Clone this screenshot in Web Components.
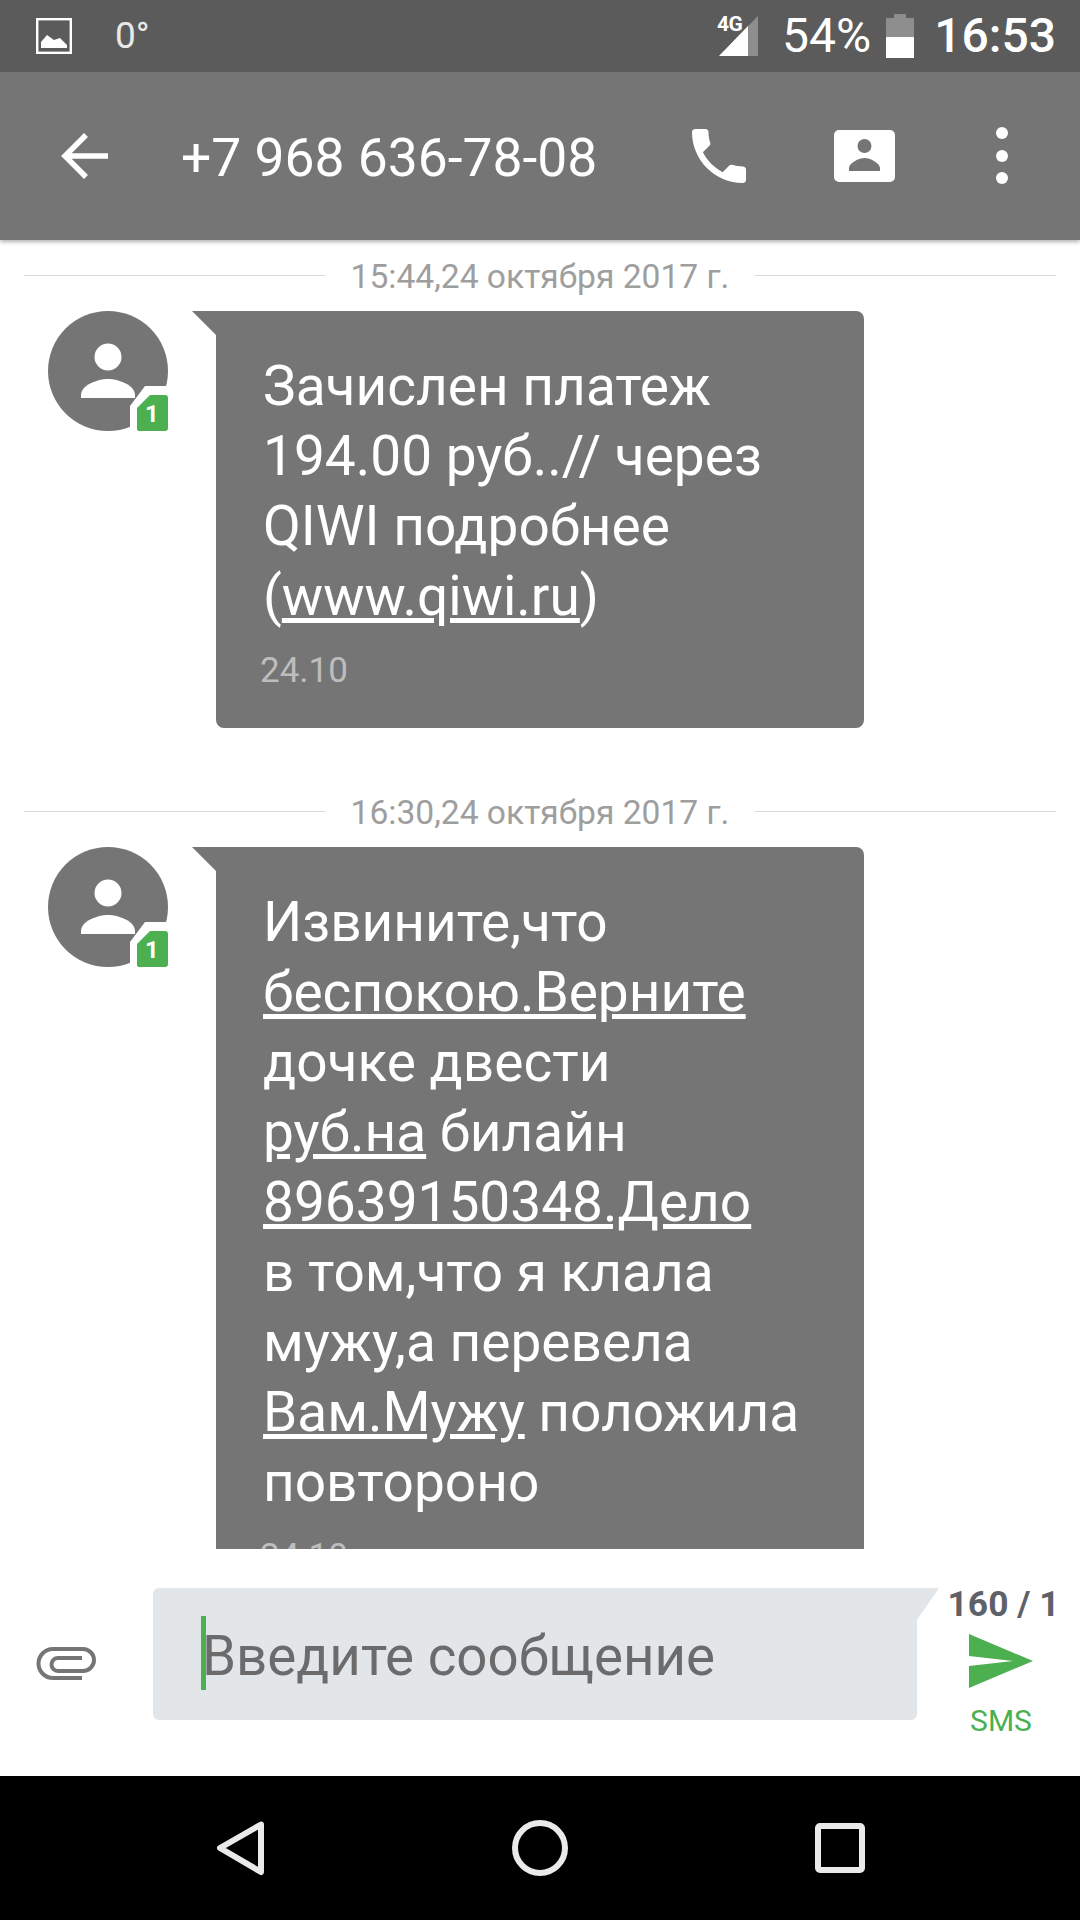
<!DOCTYPE html>
<html lang="ru">
<head>
<meta charset="utf-8">
<title>SMS</title>
<style>
  html, body { margin: 0; padding: 0; background: #fff; }
  body { width: 1080px; height: 1920px; overflow: hidden; font-family: Roboto, "Noto Sans", sans-serif; }
  sms-app { width: 1080px; height: 1920px; }
</style>
</head>
<body>
<sms-app>
  <status-bar slot="status"></status-bar>
  <app-toolbar slot="toolbar" title-text="+7 968 636-78-08"></app-toolbar>
  <date-divider>15:44,24 октября 2017 г.</date-divider>
  <sms-message time="24.10">Зачислен платеж<br>194.00 руб..// через<br>QIWI подробнее<br>(<u>www.qiwi.ru</u>)</sms-message>
  <date-divider class="second">16:30,24 октября 2017 г.</date-divider>
  <sms-message time="24.10">Извините,что<br><u>беспокою.Верните</u><br>дочке двести<br><u>руб.на</u> билайн<br><u>89639150348.Дело</u><br>в том,что я клала<br>мужу,а перевела<br><u>Вам.Мужу</u> положила<br>повтороно</sms-message>
  <composer-bar slot="composer"></composer-bar>
  <nav-bar slot="nav"></nav-bar>
</sms-app>
<script>
function def(name, html) {
  customElements.define(name, class extends HTMLElement {
    constructor() { super(); this.attachShadow({mode: 'open'}).innerHTML = typeof html === 'function' ? html(this) : html; }
  });
}

def('sms-app', `<style>
  :host { display: flex; flex-direction: column; background: #fff; }
  .list { flex: 1 1 auto; min-height: 0; overflow: hidden; display: flex; flex-direction: column; }
</style>
<slot name="status"></slot>
<slot name="toolbar"></slot>
<div class="list"><slot></slot></div>
<slot name="composer"></slot>
<slot name="nav"></slot>`);

def('status-bar', `<style>
  :host { display: flex; flex: none; align-items: center; height: 72px; background: #5b5b5b; color: #fff; font-family: Roboto, sans-serif; position: relative; z-index: 3; }
  .pic { margin-left: 36px; display: block; }
  .deg { margin-left: 43px; font-size: 37px; color: #e8e8e8; line-height: 72px; }
  .sig { margin-left: auto; display: block; }
  .pct { margin-left: 21px; font-size: 48px; line-height: 72px; }
  .bat { margin-left: 15px; display: block; }
  .clock { margin-left: 20px; margin-right: 24px; font-size: 48px; font-weight: 500; line-height: 72px; }
  .g { position: absolute; left: 717px; top: 14px; font: 700 21px/20px Roboto, sans-serif; letter-spacing: -.5px; }
</style>
<svg class="pic" width="36" height="36" viewBox="0 0 36 36"><rect x="1.2" y="1.2" width="33.600" height="33.600" fill="none" stroke="#fff" stroke-width="2.400"/><path d="M5 30v-6l6-7 7 5 6-2 7 7v3z" fill="#fff"/></svg>
<span class="deg">0°</span>
<svg class="sig" width="42" height="42" viewBox="0 0 42 42"><path d="M0 41 39 1v40z" fill="#8e8e8e"/><path d="M0 41 29 11v30z" fill="#fff"/></svg>
<span class="g">4G</span>
<span class="pct">54%</span>
<svg class="bat" width="28" height="44" viewBox="0 0 28 44"><path d="M8 0h12v4h8v19H0V4h8z" fill="#8e8e8e"/><rect y="23" width="28" height="21" fill="#fff"/></svg>
<span class="clock">16:53</span>`);

def('app-toolbar', el => `<style>
  :host { display: flex; flex: none; align-items: center; height: 168px; background: #757575; color: #fff; box-shadow: 0 2px 4px rgba(0,0,0,.3); position: relative; z-index: 2; }
  svg { display: block; flex: none; }
  .title { margin-left: 70px; font: 400 53.400px/1 Roboto, sans-serif; white-space: nowrap; width: 502px; margin-top: 3px; }
  .card { margin-left: 79px; }
  .dots { margin-left: 101px; }
</style>
<svg style="margin-left:57px" width="54" height="54" viewBox="0 0 54 54"><path d="M51 27H8M29 6 8 27l21 21" fill="none" stroke="#fff" stroke-width="5.500"/></svg>
<span class="title">${el.getAttribute('title-text') || ''}</span>
<svg class="call" width="72" height="72" viewBox="0 0 24 24"><path fill="#fff" d="M6.62 10.79c1.44 2.83 3.76 5.14 6.59 6.59l2.2-2.2c.27-.27.67-.36 1.02-.24 1.12.37 2.33.57 3.57.57.55 0 1 .45 1 1V20c0 .55-.45 1-1 1-9.39 0-17-7.61-17-17 0-.55.45-1 1-1h3.5c.55 0 1 .45 1 1 0 1.25.2 2.45.57 3.57.11.35.03.74-.25 1.02l-2.2 2.2z"/></svg>
<svg class="card" width="61" height="52" viewBox="0 0 61 52"><path fill="#fff" fill-rule="evenodd" d="M5 0h51a5 5 0 0 1 5 5v42a5 5 0 0 1-5 5H5a5 5 0 0 1-5-5V5a5 5 0 0 1 5-5zM30.500 9a7 7 0 1 0 0 14 7 7 0 0 0 0-14zM15 41h31v-3c0-5-10-10-15.500-10S15 33 15 38z"/></svg>
<svg class="dots" width="12" height="58" viewBox="0 0 12 58"><circle cx="6" cy="6" r="6" fill="#fff"/><circle cx="6" cy="29" r="6" fill="#fff"/><circle cx="6" cy="51" r="6" fill="#fff"/></svg>`);

def('date-divider', `<style>
  :host { display: flex; flex: none; align-items: center; height: 71px; padding: 0 24px; color: #9e9e9e; font: 400 33.600px/1 Roboto, sans-serif; }
  :host(.second) { margin-top: 47px; height: 72px; }
  i { flex: 1 1 0; height: 1px; background: #dcdcdc; }
  span { margin: 3px 25px 0; white-space: nowrap; }
</style><i></i><span><slot></slot></span><i></i>`);

def('contact-avatar', `<style>
  :host { display: block; flex: none; width: 120px; height: 120px; }
  svg { display: block; }
  text { font: 700 24px Roboto, sans-serif; fill: #fff; }
</style>
<svg width="120" height="120" viewBox="0 0 120 120">
  <circle cx="60" cy="60" r="60" fill="#757575"/>
  <circle cx="60" cy="46" r="13.500" fill="#fff"/>
  <path d="M33 87v-3c0-10 17-16 27-16s27 6 27 16v3z" fill="#fff"/>
  <path d="M82 120V95l15-20h23v45z" fill="#fff"/>
  <path d="M89 118V97l13-13h15a3 3 0 0 1 3 3v30a3 3 0 0 1-3 3H91a2 2 0 0 1-2-2z" fill="#4caf50"/>
  <text x="104" y="111" text-anchor="middle">1</text>
</svg>`);

def('sms-message', el => `<style>
  :host { display: flex; flex: none; padding: 0 0 0 48px; }
  .bubble { position: relative; margin-left: 48px; width: 648px; box-sizing: border-box; padding: 40px 48px 0 47px; background: #757575; color: #fff; border-radius: 0 8px 8px 8px; font: 400 55px/70px Roboto, sans-serif; }
  .bubble::before { content: ""; position: absolute; left: -24px; top: 0; width: 24px; height: 24px; background: #757575; clip-path: polygon(0 0, 100% 0, 100% 100%); }
  .text { white-space: nowrap; }
  .time { font-size: 35px; line-height: 40px; color: #bdbdbd; margin: 20px 0 0 -3px; padding-bottom: 37px; }
</style>
<contact-avatar></contact-avatar>
<div class="bubble"><div class="text"><slot></slot></div><div class="time">${el.getAttribute('time') || ''}</div></div>`);

def('composer-bar', `<style>
  :host { display: flex; flex: none; height: 227px; background: #fff; font-family: Roboto, sans-serif; position: relative; }
  svg { display: block; flex: none; }
  .clip { margin: 98px 0 0 36px; }
  .field { position: relative; flex: none; margin: 39px 0 0 56px; width: 764px; height: 132px; background: #e2e6e9; border-radius: 6px 0 6px 6px; display: flex; align-items: center; color: #6b6b6b; font-size: 54.700px; }
  .field::after { content: ""; position: absolute; left: 100%; top: 0; width: 22px; height: 32px; background: #e2e6e9; clip-path: polygon(0 0, 100% 0, 0 100%); }
  .caret { position: absolute; left: 48px; top: 28px; width: 5px; height: 74px; background: #4caf50; }
  .ph { margin: 4px 0 0 49px; white-space: nowrap; }
  .send { width: 110px; margin-left: 29px; display: flex; flex-direction: column; align-items: center; flex: none; padding-top: 36px; }
  .count { font-weight: 700; font-size: 35.400px; line-height: 38px; color: #5f6168; white-space: nowrap; margin-left: 5px; }
  .send svg { margin: 11px 0 0 0; }
  .sms { color: #4caf50; font-size: 30px; line-height: 36px; margin: 15px 0 0 0; }
</style>
<svg class="clip" width="61" height="33" viewBox="0 0 61 33"><path d="M46 31H17A14.500 14.500 0 0 1 17 2H47A11 11 0 0 1 47 24H22A6.500 6.500 0 0 1 22 11H46" fill="none" stroke="#757575" stroke-width="4"/></svg>
<div class="field"><span class="caret"></span><span class="ph">Введите сообщение</span></div>
<div class="send"><span class="count">160 / 1</span>
<svg width="64" height="54" viewBox="0 0 64 54"><path d="M0 0 64 27 0 54V32l44-5L0 22z" fill="#4caf50"/></svg>
<span class="sms">SMS</span></div>`);

def('nav-bar', `<style>
  :host { display: flex; flex: none; align-items: center; height: 144px; background: #000; position: relative; }
  svg { display: block; flex: none; }
</style>
<svg style="margin-left:215px" width="52" height="60" viewBox="0 0 52 60"><path d="M46 6.500 5 30l41 24z" fill="none" stroke="#eaeaea" stroke-width="6" stroke-linejoin="round"/></svg>
<svg style="margin-left:243px" width="60" height="60" viewBox="0 0 60 60"><circle cx="30" cy="30" r="25" fill="none" stroke="#eaeaea" stroke-width="6"/></svg>
<svg style="margin-left:243px" width="54" height="54" viewBox="0 0 54 54"><rect x="5" y="5" width="44" height="44" rx="2" fill="none" stroke="#eaeaea" stroke-width="6"/></svg>`);
</script>
</body>
</html>
